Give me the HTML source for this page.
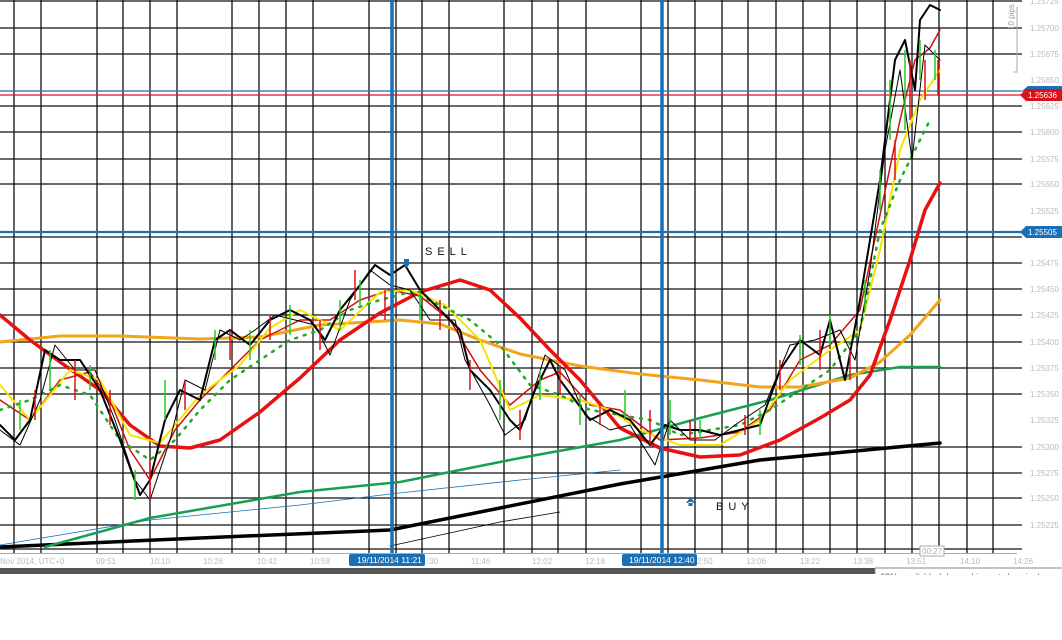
<!DOCTYPE html>
<html><head><meta charset="utf-8"><style>
html,body{margin:0;padding:0;background:#fff;width:1062px;height:640px;overflow:hidden;font-family:"Liberation Sans",sans-serif}
svg{display:block}
</style></head><body>
<svg width="1062" height="640" viewBox="0 0 1062 640" xmlns="http://www.w3.org/2000/svg">
<rect width="1062" height="640" fill="#fff"/>
<g stroke="#111" stroke-width="1.3" id="grid">
<path d="M0 1H1022M0 28H1022M0 54H1022M0 106H1022M0 132H1022M0 159H1022M0 184H1022M0 237H1022M0 263H1022M0 289H1022M0 315H1022M0 342H1022M0 368H1022M0 394H1022M0 447H1022M0 473H1022M0 498H1022M0 525H1022M0 549H1022"/>
<path d="M14 0V553M41 0V553M97 0V553M123 0V553M150 0V553M177 0V553M232 0V553M259 0V553M286 0V553M313 0V553M369 0V553M396 0V553M422 0V553M449 0V553M504 0V553M532 0V553M558 0V553M586 0V553M641 0V553M668 0V553M695 0V553M722 0V553M748 0V553M776 0V553M803 0V553M830 0V553M857 0V553M885 0V553M912 0V553M939 0V553M967 0V553M993 0V553"/>
</g>
<g font-size="8" fill="#bbb" font-family="Liberation Sans,sans-serif">
<text x="1030" y="4">1.25725</text><text x="1030" y="31">1.25700</text><text x="1030" y="57">1.25675</text><text x="1030" y="83">1.25650</text><text x="1030" y="109">1.25625</text><text x="1030" y="135">1.25600</text><text x="1030" y="162">1.25575</text><text x="1030" y="187">1.25550</text><text x="1030" y="214">1.25525</text><text x="1030" y="266">1.25475</text><text x="1030" y="292">1.25450</text><text x="1030" y="318">1.25425</text><text x="1030" y="345">1.25400</text><text x="1030" y="371">1.25375</text><text x="1030" y="397">1.25350</text><text x="1030" y="423">1.25325</text><text x="1030" y="450">1.25300</text><text x="1030" y="476">1.25275</text><text x="1030" y="501">1.25250</text><text x="1030" y="528">1.25225</text>
</g>
<path d="M1017 7V72H1013" stroke="#aaa" fill="none"/>
<text x="1014" y="30" font-size="8" fill="#999" transform="rotate(-90 1014 30)">10 pips</text>
<path d="M0 91H1022" stroke="#1a6fb5" stroke-width="1.2"/>
<path d="M0 95H1022" stroke="#e0101a" stroke-width="1.2"/>
<path d="M0 232H1022" stroke="#1a6fb5" stroke-width="2.2"/>
<path d="M1022 91l6-5h34v8h-34z" fill="#1a6fb5"/>
<path d="M1020 95l6-6h36v12h-36z" fill="#e0101a"/>
<text x="1028" y="98" font-size="8" fill="#fff">1.25636</text>
<path d="M1020 232l6-6h36v12h-36z" fill="#1a6fb5"/>
<text x="1028" y="235" font-size="8" fill="#fff">1.25505</text>
<g fill="none" stroke-linejoin="round" stroke-linecap="round">
<path d="M0 547L200 538L390 530L500 508L620 484L760 460L940 443" stroke="#000" stroke-width="3.5"/>
<path d="M0 545L150 520L300 505L390 494L520 480L620 470" stroke="#1a6fb5" stroke-width="0.8"/>
<path d="M390 546L500 522L560 512" stroke="#000" stroke-width="0.8"/>
<path d="M45 547L150 518L300 492L400 482L520 458L620 440L700 418L770 400L850 375L900 367L940 367" stroke="#17a050" stroke-width="2.5"/>
<path d="M0 342L60 336L120 336L200 339L260 337L320 325L400 320L440 324L480 340L520 354L580 366L640 374L700 380L760 387L800 387L850 378L880 362L910 335L940 300" stroke="#f2a51a" stroke-width="3"/>
<path d="M0 315L30 340L60 362L100 390L130 425L160 446L190 448L220 440L260 412L300 378L340 340L380 313L420 292L460 280L490 290L520 318L550 350L580 380L620 428L660 448L700 457L740 455L780 440L820 418L850 400L870 375L890 320L910 260L925 210L940 183" stroke="#e81010" stroke-width="3.5"/>
<path d="M0 400L30 420L60 380L90 372L110 400L130 450L150 480L175 430L200 400L230 370L260 340L300 320L330 320L360 300L390 290L420 296L450 320L480 370L510 405L540 380L560 372L590 405L620 410L660 440L700 438L740 432L770 410L800 360L830 345L860 310L880 215L900 120L915 60L930 48L940 30" stroke="#d01010" stroke-width="1.5"/>
<path d="M0 385L30 420L70 370L100 380L130 435L160 443L200 395L240 365L270 328L300 310L340 330L380 292L410 290L445 305L480 340L510 410L540 395L580 400L610 410L640 430L680 445L720 445L760 420L790 380L830 350L860 330L880 250L900 150L920 100L940 70" stroke="#f5e400" stroke-width="2"/>
<path d="M0 410L30 400L60 385L90 395L120 440L150 460L175 440L200 410L230 380L260 360L290 340L320 330L350 310L380 300L410 292L440 305L470 320L500 345L530 385L560 395L590 410L620 415L650 420L680 435L710 430L740 425L770 410L800 390L830 370L860 330L880 230L900 180L915 150L930 120" stroke="#22aa22" stroke-width="2.5" stroke-dasharray="2 7"/>
<path d="M0 425L15 440L30 420L45 350L60 360L80 360L100 390L120 440L140 495L150 480L165 420L180 390L200 400L215 340L230 330L250 345L270 320L290 310L310 320L325 340L340 310L360 285L375 265L390 275L405 265L420 290L440 310L460 330L470 370L490 390L510 420L520 430L535 390L550 360L560 380L575 400L590 420L610 410L630 420L650 445L665 425L680 430L700 430L720 435L740 430L760 425L780 370L800 340L820 355L830 320L845 380L860 300L880 180L895 60L905 40L915 90L920 20L930 5L940 10" stroke="#000" stroke-width="2"/>
<path d="M0 430L20 445L40 400L55 345L75 370L95 370L115 420L135 480L150 500L170 440L185 380L205 390L220 330L240 340L255 330L275 315L295 320L315 325L330 355L350 300L370 270L390 285L410 290L430 320L455 320L465 360L490 405L505 435L525 420L545 355L565 370L585 415L610 430L630 425L655 465L670 420L690 440L715 440L735 425L765 405L790 345L815 340L840 330L855 360L870 270L885 150L900 70L912 160L925 45L940 60" stroke="#000" stroke-width="1"/>
</g>
<g stroke="#22cc22" stroke-width="1.5">
<path d="M20 400v30M50 350v40M90 365v25M135 470v30M165 380v40M215 330v30M250 330v30M290 305v30M340 300v30M360 280v25M420 290v30M500 380v40M540 370v30M580 395v30M625 390v30M670 400v35M700 420v20M760 410v25M800 335v30M830 315v30M865 280v30M880 170v40M890 80v60M905 50v80M920 40v40M935 50v30"/>
</g>
<g stroke="#e01010" stroke-width="1.5">
<path d="M35 390v30M75 360v40M110 390v35M150 460v40M185 380v30M230 330v30M270 315v25M320 320v30M355 270v30M385 290v30M440 300v30M470 360v30M520 410v30M560 365v30M600 405v20M650 410v35M690 420v20M745 415v20M780 360v30M820 330v40M850 350v30M895 140v40M910 60v60M925 60v40M938 60v35"/>
</g>
<path d="M392 0V563M662 0V563" stroke="#1a6fb5" stroke-width="3.5"/>
<path d="M402 262h9l-4.5 6z M404 259h5v4h-5z" fill="#1a6fb5"/>
<text x="425" y="255" font-size="11" fill="#111" letter-spacing="5">SELL</text>
<path d="M686 503h9l-4.5-6z M688.5 502h4v4h-4z" fill="#1a6fb5"/>
<text x="716" y="510" font-size="11" fill="#111" letter-spacing="5">BUY</text>
<rect x="0" y="553" width="1062" height="15" fill="#fff"/>
<path d="M0 553.5H1017" stroke="#aaa" stroke-width="1"/>
<g font-size="8" fill="#bbb">
<text x="0" y="564">Nov 2014, UTC+0</text><text x="96" y="564">09:51</text><text x="150" y="564">10:10</text><text x="203" y="564">10:26</text><text x="257" y="564">10:42</text><text x="310" y="564">10:58</text><text x="427" y="564">:30</text><text x="471" y="564">11:46</text><text x="532" y="564">12:02</text><text x="585" y="564">12:18</text><text x="697" y="564">2:50</text><text x="746" y="564">13:06</text><text x="800" y="564">13:22</text><text x="853" y="564">13:38</text><text x="906" y="564">13:51</text><text x="960" y="564">14:10</text><text x="1013" y="564">14:26</text>
</g>
<rect x="349" y="554" width="76" height="12" rx="2" fill="#1a6fb5"/>
<text x="357" y="563" font-size="8.5" fill="#fff">19/11/2014 11:21</text>
<rect x="622" y="554" width="75" height="12" rx="2" fill="#1a6fb5"/>
<text x="629" y="563" font-size="8.5" fill="#fff">19/11/2014 12:40</text>
<rect x="920" y="546" width="24" height="10" fill="#fff" stroke="#aaa"/>
<text x="922" y="554" font-size="8" fill="#aaa">00:27</text>
<rect x="0" y="568" width="1062" height="6" fill="#555"/>
<rect x="875" y="568" width="187" height="6" fill="#fff"/>
<path d="M875 568V574M875 568H1062" stroke="#888"/>
<text x="880" y="580" font-size="9" fill="#555">68% available (plugged in, not charging)</text>
<rect x="0" y="575" width="1062" height="65" fill="#fff"/>
</svg>
</body></html>
